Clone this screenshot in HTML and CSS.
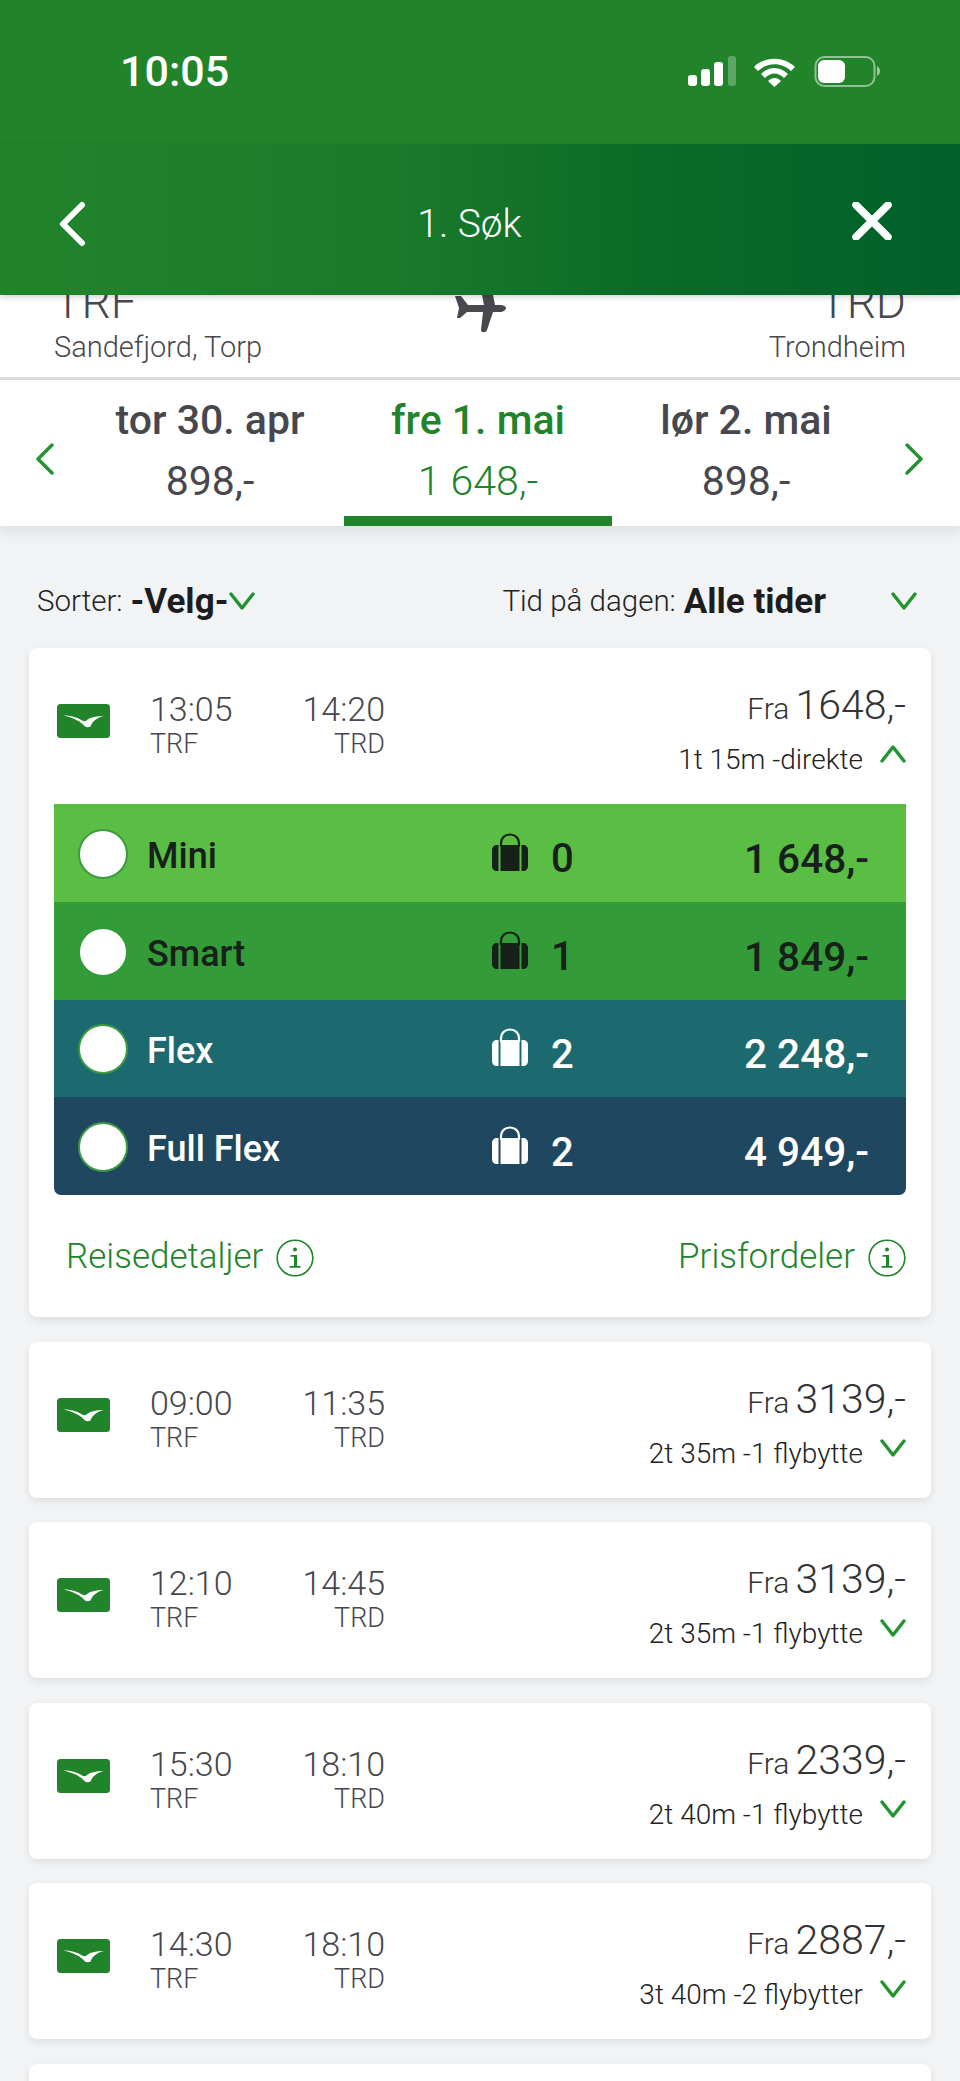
FILE: index.html
```html
<!DOCTYPE html>
<html lang="no">
<head>
<meta charset="utf-8">
<title>1. Søk</title>
<link rel="stylesheet" href="styles.css">
</head>
<body>
<svg class="defs" width="0" height="0" aria-hidden="true">
  <defs>
    <symbol id="logo" viewBox="0 0 53 34">
      <rect width="53" height="34" rx="3.500" fill="#21842a"/>
      <path d="M6 11.500C14 11.500 20 13 25 16.500C27 17.500 28.500 17.500 30 16C34 13 40 12 47 12C41 13.500 36 16 33.500 22.500C31.500 23.500 29.500 23.500 28 22.500C24 17.500 16 13.500 6 11.500Z" fill="#fff"/>
    </symbol>
    <symbol id="bag" viewBox="0 0 36 38">
      <path d="M9 14V10C9 5 13 1.500 18 1.500C23 1.500 27 5 27 10V14" fill="none" stroke="currentColor" stroke-width="2.200"/>
      <path d="M6.500 12H5C2 12 0 14 0 17V33C0 36 2 38 5 38H6.500Z" fill="currentColor"/>
      <rect x="8.500" y="12" width="19" height="26" fill="currentColor"/>
      <path d="M29.500 12H31C34 12 36 14 36 17V33C36 36 34 38 31 38H29.500Z" fill="currentColor"/>
    </symbol>
    <symbol id="down" viewBox="0 0 26 20">
      <path d="M2 3L13 17L24 3" fill="none" stroke="#21942f" stroke-width="3.400" stroke-linecap="round" stroke-linejoin="round"/>
    </symbol>
    <symbol id="up" viewBox="0 0 26 20">
      <path d="M2 17L13 3L24 17" fill="none" stroke="#21942f" stroke-width="3.400" stroke-linecap="round" stroke-linejoin="round"/>
    </symbol>
    <symbol id="info" viewBox="0 0 38 38">
      <circle cx="19" cy="19" r="17.800" fill="none" stroke="#21842a" stroke-width="1.600"/>
      <circle cx="19" cy="10.500" r="2" fill="#21842a"/>
      <path d="M14.500 16H21V27H24.500V28.800H13.500V27H18V17.800H14.500Z" fill="#21842a"/>
    </symbol>
  </defs>
</svg>

<div class="page">
  <div class="status">
    <span class="clock">10:05</span>
    <svg class="status-icons" width="192" height="31" viewBox="0 0 192 31">
      <rect x="0" y="19" width="9" height="11" rx="3" fill="#fff"/>
      <rect x="13" y="13" width="9" height="17" rx="3" fill="#fff"/>
      <rect x="26" y="6" width="9" height="24" rx="3" fill="#fff"/>
      <rect x="40" y="0" width="8" height="30" rx="3" fill="#fff" opacity=".28"/>
      <path d="M66 11C77 0 96 0 107 11L103 15C94 6 79 6 70 15Z" fill="#fff"/>
      <path d="M73 18C81 10 92 10 100 18L96 22C90 16 83 16 77 22Z" fill="#fff"/>
      <path d="M80 25C84 21 89 21 93 25L86.500 31Z" fill="#fff"/>
      <rect x="127.500" y="1" width="59" height="29" rx="9" fill="none" stroke="#fff" stroke-width="2" opacity=".5"/>
      <rect x="130" y="4" width="27" height="23" rx="6" fill="#fff"/>
      <path d="M189 10C191 11 192 13 192 15C192 17 191 19 189 20Z" fill="#fff" opacity=".55"/>
    </svg>
  </div>

  <header class="nav">
    <svg class="nav-back" width="30" height="46" viewBox="0 0 30 46"><path d="M25 4L6 23L25 42" fill="none" stroke="#fff" stroke-width="6" stroke-linecap="round" stroke-linejoin="round"/></svg>
    <h1 class="nav-title">1. Søk</h1>
    <svg class="nav-close" width="40" height="38" viewBox="0 0 40 38"><path d="M4 3L36 35M36 3L4 35" fill="none" stroke="#fff" stroke-width="7.500" stroke-linecap="round"/></svg>
  </header>

  <section class="route">
    <div class="place">
      <div class="code">TRF</div>
      <div class="city">Sandefjord, Torp</div>
    </div>
    <svg class="plane" width="52" height="38" viewBox="0 0 52 38">
      <path d="M1 1L7 1L14 10H30L28 0H39L41 10H46C49 10 52 11 52 13C52 15 49 17 46 17H39L33 35C32 38 27 38 27 35L29 17H13L6 23H3L5 13Z" fill="#48484e"/>
    </svg>
    <div class="place place-end">
      <div class="code">TRD</div>
      <div class="city">Trondheim</div>
    </div>
  </section>

  <nav class="dates">
    <svg class="arrow" width="20" height="32" viewBox="0 0 20 32"><path d="M17 2L3 16L17 30" fill="none" stroke="#21942f" stroke-width="3.400" stroke-linecap="round" stroke-linejoin="round"/></svg>
    <div class="date">
      <div class="date-name">tor 30. apr</div>
      <div class="date-price">898,-</div>
    </div>
    <div class="date date-active">
      <div class="date-name">fre 1. mai</div>
      <div class="date-price">1 648,-</div>
    </div>
    <div class="date">
      <div class="date-name">lør 2. mai</div>
      <div class="date-price">898,-</div>
    </div>
    <svg class="arrow arrow-next" width="20" height="32" viewBox="0 0 20 32"><path d="M3 2L17 16L3 30" fill="none" stroke="#21942f" stroke-width="3.400" stroke-linecap="round" stroke-linejoin="round"/></svg>
  </nav>

  <div class="filters">
    <div class="filter">
      <span class="filter-label">Sorter:</span>
      <strong class="filter-value">-Velg-</strong>
      <svg class="chev chev-tight"><use href="#down"/></svg>
    </div>
    <div class="filter">
      <span class="filter-label">Tid på dagen:</span>
      <strong class="filter-value">Alle tider</strong>
      <svg class="chev chev-far"><use href="#down"/></svg>
    </div>
  </div>

  <main class="list">
    <article class="card">
      <div class="flight">
        <svg class="logo"><use href="#logo"/></svg>
        <div class="times">
          <div class="leg"><div class="time">13:05</div><div class="iata">TRF</div></div>
          <div class="leg leg-end"><div class="time">14:20</div><div class="iata">TRD</div></div>
        </div>
        <div class="summary">
          <div class="from"><span class="fra">Fra</span> <span class="amount">1648,-</span></div>
          <div class="trip"><span>1t 15m -direkte</span><svg class="chev"><use href="#up"/></svg></div>
        </div>
      </div>
      <div class="fares">
        <div class="fare fare-mini">
          <span class="radio"></span><span class="fare-name">Mini</span>
          <svg class="bag"><use href="#bag"/></svg><span class="bag-count">0</span>
          <span class="fare-price">1 648,-</span>
        </div>
        <div class="fare fare-smart">
          <span class="radio"></span><span class="fare-name">Smart</span>
          <svg class="bag"><use href="#bag"/></svg><span class="bag-count">1</span>
          <span class="fare-price">1 849,-</span>
        </div>
        <div class="fare fare-flex">
          <span class="radio"></span><span class="fare-name">Flex</span>
          <svg class="bag"><use href="#bag"/></svg><span class="bag-count">2</span>
          <span class="fare-price">2 248,-</span>
        </div>
        <div class="fare fare-full">
          <span class="radio"></span><span class="fare-name">Full Flex</span>
          <svg class="bag"><use href="#bag"/></svg><span class="bag-count">2</span>
          <span class="fare-price">4 949,-</span>
        </div>
      </div>
      <div class="links">
        <a class="link link-start">Reisedetaljer <svg class="info"><use href="#info"/></svg></a>
        <a class="link">Prisfordeler <svg class="info"><use href="#info"/></svg></a>
      </div>
    </article>

    <article class="card">
      <div class="flight">
        <svg class="logo"><use href="#logo"/></svg>
        <div class="times">
          <div class="leg"><div class="time">09:00</div><div class="iata">TRF</div></div>
          <div class="leg leg-end"><div class="time">11:35</div><div class="iata">TRD</div></div>
        </div>
        <div class="summary">
          <div class="from"><span class="fra">Fra</span> <span class="amount">3139,-</span></div>
          <div class="trip"><span>2t 35m -1 flybytte</span><svg class="chev"><use href="#down"/></svg></div>
        </div>
      </div>
    </article>

    <article class="card">
      <div class="flight">
        <svg class="logo"><use href="#logo"/></svg>
        <div class="times">
          <div class="leg"><div class="time">12:10</div><div class="iata">TRF</div></div>
          <div class="leg leg-end"><div class="time">14:45</div><div class="iata">TRD</div></div>
        </div>
        <div class="summary">
          <div class="from"><span class="fra">Fra</span> <span class="amount">3139,-</span></div>
          <div class="trip"><span>2t 35m -1 flybytte</span><svg class="chev"><use href="#down"/></svg></div>
        </div>
      </div>
    </article>

    <article class="card">
      <div class="flight">
        <svg class="logo"><use href="#logo"/></svg>
        <div class="times">
          <div class="leg"><div class="time">15:30</div><div class="iata">TRF</div></div>
          <div class="leg leg-end"><div class="time">18:10</div><div class="iata">TRD</div></div>
        </div>
        <div class="summary">
          <div class="from"><span class="fra">Fra</span> <span class="amount">2339,-</span></div>
          <div class="trip"><span>2t 40m -1 flybytte</span><svg class="chev"><use href="#down"/></svg></div>
        </div>
      </div>
    </article>

    <article class="card">
      <div class="flight">
        <svg class="logo"><use href="#logo"/></svg>
        <div class="times">
          <div class="leg"><div class="time">14:30</div><div class="iata">TRF</div></div>
          <div class="leg leg-end"><div class="time">18:10</div><div class="iata">TRD</div></div>
        </div>
        <div class="summary">
          <div class="from"><span class="fra">Fra</span> <span class="amount">2887,-</span></div>
          <div class="trip"><span>3t 40m -2 flybytter</span><svg class="chev"><use href="#down"/></svg></div>
        </div>
      </div>
    </article>

    <article class="card card-peek"></article>
  </main>
</div>
</body>
</html>
```
FILE: styles.css
```css
* { box-sizing: border-box; }
html, body { margin: 0; padding: 0; }
body {
  width: 960px;
  height: 2081px;
  overflow: hidden;
  background: #f1f3f5;
  font-family: Roboto, "Liberation Sans", sans-serif;
  color: #47474d;
}
.defs { position: absolute; }
.page { display: flex; flex-direction: column; height: 2081px; overflow: hidden; }

/* Status bar */
.status {
  height: 144px;
  flex: none;
  background: #21842a;
  color: #fff;
  display: flex;
  justify-content: space-between;
  align-items: flex-start;
  padding: 46px 80px 0 120px;
}
.clock { font-size: 43px; line-height: 50px; font-weight: 500; }
.status-icons { margin-top: 10px; }

/* Nav */
.nav {
  position: relative;
  z-index: 2;
  height: 151px;
  flex: none;
  background: linear-gradient(90deg, #21842a 0%, #1b7a2a 40%, #0a6b28 68%, #00602a 100%);
  display: flex;
  justify-content: space-between;
  align-items: flex-start;
  padding: 57px 68px 0 57px;
  box-shadow: 0 2px 6px rgba(0,0,0,.2);
}
.nav-title {
  margin: 1px 0 0;
  font-size: 39px;
  line-height: 44px;
  font-weight: 300;
  color: #fff;
}
.nav-close { margin-top: 1px; }

/* Route */
.route {
  height: 85px;
  flex: none;
  background: #fff;
  border-bottom: 3px solid #dedede;
  overflow: hidden;
  display: flex;
  justify-content: space-between;
  align-items: flex-end;
  padding: 0 54px 8px;
  position: relative;
}
.place { display: flex; flex-direction: column; flex: 1; }
.place-end { align-items: flex-end; }
.code { font-size: 46px; line-height: 46px; font-weight: 300; }
.city { font-size: 29px; line-height: 44px; font-weight: 300; }
.plane { align-self: flex-start; flex: none; }

/* Dates */
.dates {
  height: 146px;
  flex: none;
  background: #fff;
  display: flex;
  align-items: flex-start;
  padding: 0 36px 0 35px;
  position: relative;
  z-index: 1;
  box-shadow: 0 6px 14px rgba(0,0,0,.09);
}
.arrow { flex: none; margin-top: 63px; }
.arrow-next { margin-left: auto; }
.date {
  width: 268px;
  height: 146px;
  padding-top: 17px;
  text-align: center;
  flex: none;
  white-space: nowrap;
}
.date:nth-of-type(1) { margin-left: 21px; }
.date-name { font-size: 41px; line-height: 46px; font-weight: 500; }
.date-price { font-size: 41px; line-height: 46px; font-weight: 400; margin-top: 15px; }
.date-active { color: #21842a; border-bottom: 10px solid #21842a; }
.date-active .date-price { font-weight: 300; }

/* Filters */
.filters {
  height: 122px;
  flex: none;
  display: flex;
  justify-content: space-between;
  align-items: center;
  padding: 28px 43px 0 37px;
  color: #222;
}
.filter { display: flex; align-items: center; }
.filter-label { font-size: 29.500px; font-weight: 300; margin-right: 8px; }
.filter-value { font-size: 35px; font-weight: 700; color: #1d1d1f; }
.chev { width: 26px; height: 20px; flex: none; }
.chev-tight { margin-left: 1px; }
.chev-far { margin-left: 65px; }

/* Cards */
.list { display: flex; flex-direction: column; gap: 24.600px; padding: 0 29px; }
.card {
  background: #fff;
  border-radius: 8px;
  box-shadow: 0 3px 8px rgba(0,0,0,.09);
  flex: none;
}
.card-peek { height: 60px; }
.flight {
  height: 156px;
  display: flex;
  align-items: flex-start;
  padding: 0 25px 0 28px;
}
.logo { width: 53px; height: 34px; margin-top: 56px; flex: none; }
.times {
  width: 235px;
  margin-left: 40px;
  padding-top: 43px;
  display: flex;
  justify-content: space-between;
  flex: none;
}
.leg-end { text-align: right; }
.time { font-size: 34px; line-height: 36px; font-weight: 300; }
.iata { font-size: 27px; line-height: 34px; font-weight: 300; }
.summary { margin-left: auto; padding-top: 35px; text-align: right; }
.from { line-height: 44px; white-space: nowrap; }
.fra { font-size: 30px; font-weight: 300; color: #333; }
.amount { font-size: 41px; font-weight: 300; color: #333; margin-left: 2px; }
.trip {
  margin-top: 6px;
  font-size: 28px;
  line-height: 36px;
  font-weight: 300;
  color: #222;
  display: flex;
  justify-content: flex-end;
  align-items: flex-start;
  gap: 17px;
}
.trip .chev { margin-top: 2px; }

/* Fares */
.fares { margin: 0 25px; border-radius: 0 0 7px 7px; overflow: hidden; }
.fare {
  height: 97.750px;
  display: flex;
  align-items: center;
  padding: 0 37px 0 24px;
  font-weight: 500;
  color: #17211a;
}
.fare-mini { background: #5abd44; }
.fare-smart { background: #339c38; }
.fare-flex { background: #1c6a6f; color: #fff; }
.fare-full { background: #1f475f; color: #fff; }
.radio {
  width: 50px;
  height: 50px;
  border-radius: 50%;
  background: #fff;
  border: 2px solid #3c9a42;
  flex: none;
  margin-top: 2px;
}
.fare-smart .radio { border-color: #339c38; }
.fare-name { font-size: 36px; margin-left: 19px; width: 345px; margin-top: 6px; }
.bag { width: 36px; height: 38px; flex: none; margin-bottom: 2px; }
.bag-count { font-size: 40px; margin-left: 23px; margin-top: 12px; }
.fare-price { margin-left: auto; font-size: 40.500px; margin-top: 12px; }

/* Links */
.links {
  height: 122px;
  display: flex;
  justify-content: space-between;
  align-items: center;
  padding: 0 25px 0 37px;
}
.link {
  display: flex;
  align-items: center;
  gap: 13px;
  font-size: 35px;
  font-weight: 300;
  color: #21842a;
}
.info { width: 38px; height: 38px; flex: none; margin-top: 4px; }
```
